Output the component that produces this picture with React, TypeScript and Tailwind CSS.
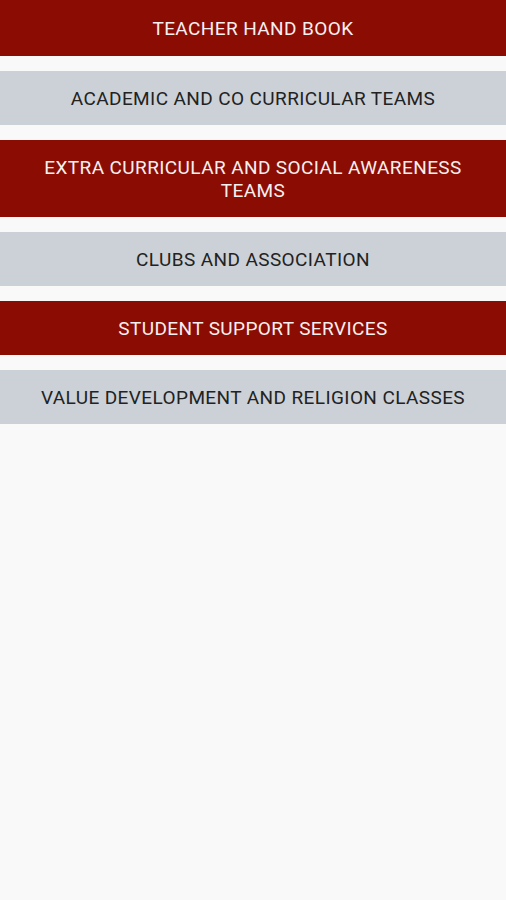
import React from 'react';

interface MenuItem {
  label: string;
  variant: 'red' | 'gray';
  tall?: boolean;
}

const items: MenuItem[] = [
  { label: 'TEACHER HAND BOOK', variant: 'red' },
  { label: 'ACADEMIC AND CO CURRICULAR TEAMS', variant: 'gray' },
  { label: 'EXTRA CURRICULAR AND SOCIAL AWARENESS TEAMS', variant: 'red', tall: true },
  { label: 'CLUBS AND ASSOCIATION', variant: 'gray' },
  { label: 'STUDENT SUPPORT SERVICES', variant: 'red' },
  { label: 'VALUE DEVELOPMENT AND RELIGION CLASSES', variant: 'gray' },
];

const App: React.FC = () => {
  return (
    <div
      className="min-h-[900px] w-full bg-[#f9f9f9]"
      style={{ fontFamily: 'Roboto, "Liberation Sans", sans-serif' }}
    >
      <div className="flex flex-col gap-[15px]">
        {items.map((item, i) => (
          <button
            key={item.label}
            type="button"
            className={[
              'flex w-full items-center justify-center px-4 text-center text-[19px] leading-[23px] tracking-[0.4px]',
              item.variant === 'red'
                ? 'bg-[#8b0c02] text-[#f7f0f0]'
                : 'bg-[#ccd1d7] text-[#222222]',
              item.tall ? 'h-[77px]' : i === 0 ? 'h-[56px]' : 'h-[54px]',
            ].join(' ')}
          >
            {item.label}
          </button>
        ))}
      </div>
    </div>
  );
};

export default App;
